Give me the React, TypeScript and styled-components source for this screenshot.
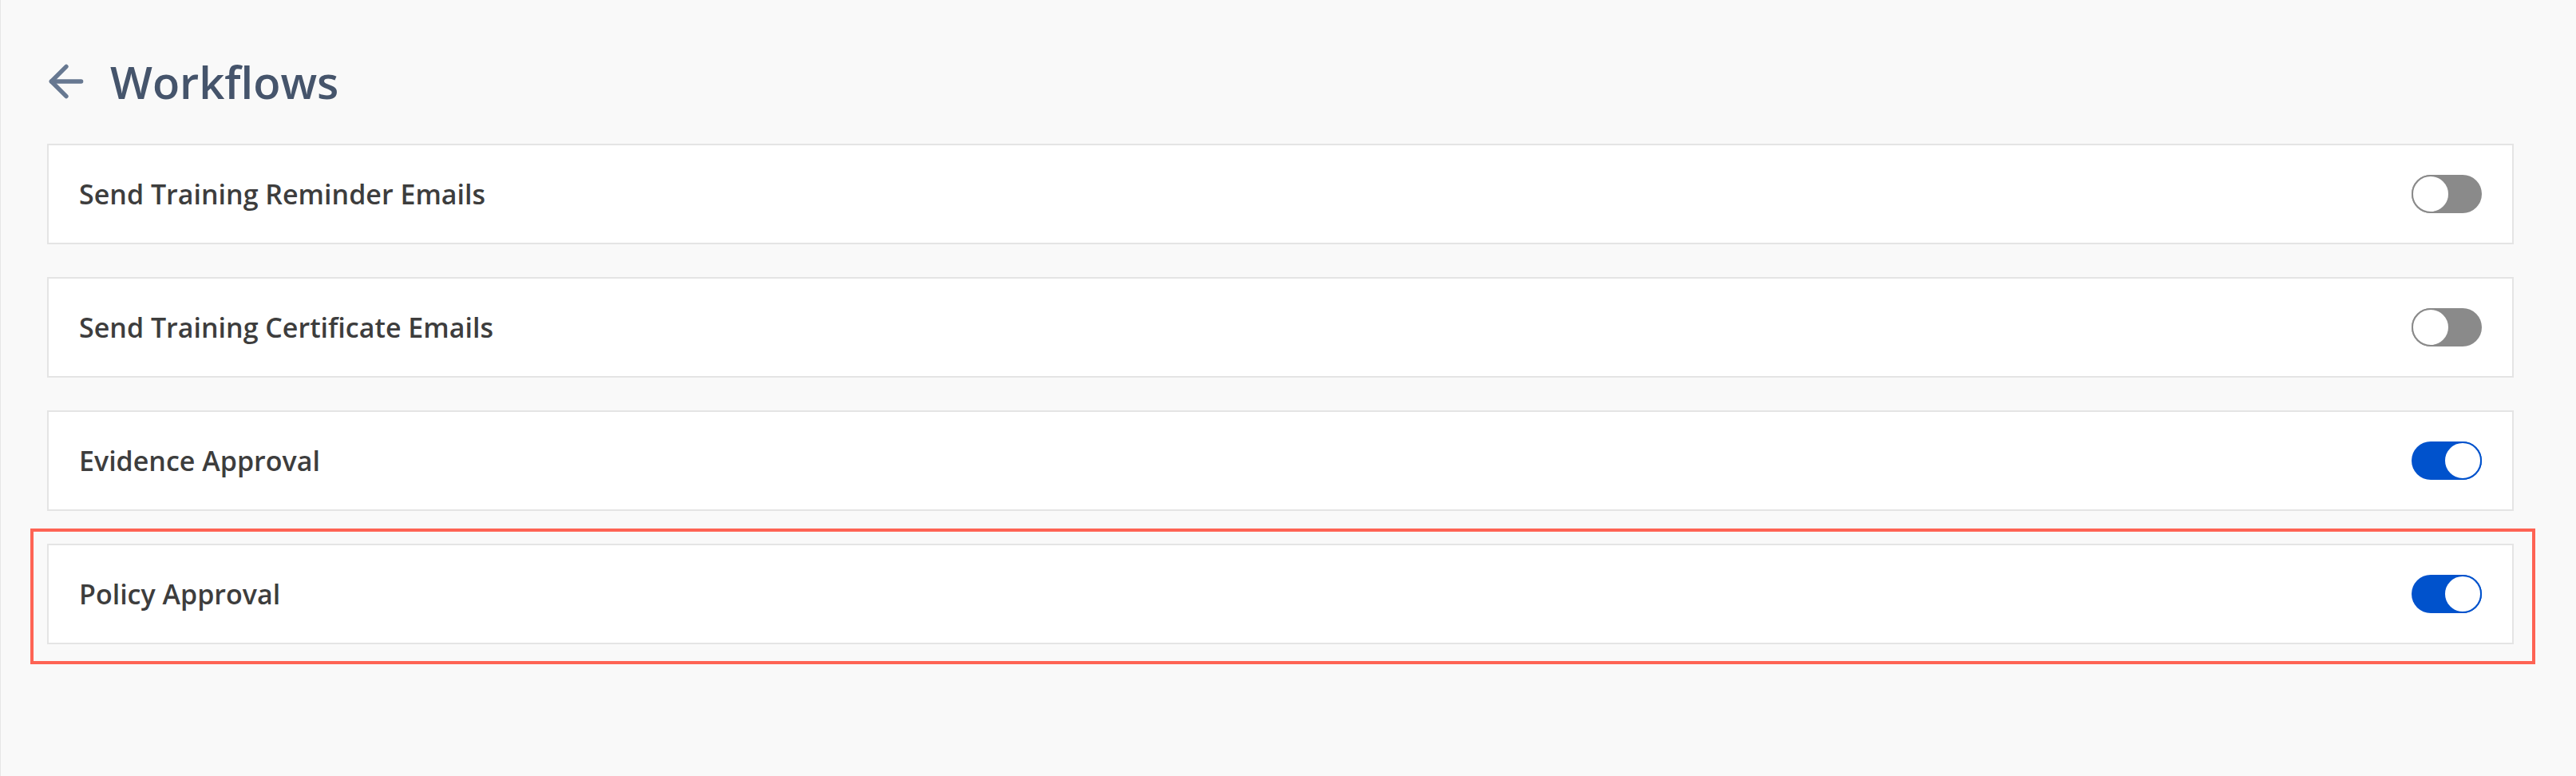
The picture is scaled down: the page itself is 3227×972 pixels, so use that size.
import React from "react";
import styled, { createGlobalStyle } from "styled-components";

const GlobalStyle = createGlobalStyle`
  html, body {
    margin: 0;
    padding: 0;
    background: #f9f9f9;
  }
  body {
    font-family: "Open Sans", "Noto Sans", sans-serif;
  }
  * { box-sizing: border-box; }
`;

const Page = styled.div`
  min-height: 100vh;
  background: #f9f9f9;
  border-left: 1px solid #e6e6e6;
  padding: 70px 78px 0 58px;
`;

const Header = styled.header`
  display: flex;
  align-items: center;
  height: 64px;
  gap: 23px;
  margin: 0 0 46px -8px;
`;

const BackButton = styled.button`
  display: flex;
  align-items: center;
  justify-content: center;
  width: 64px;
  height: 64px;
  padding: 0;
  border: none;
  background: transparent;
  color: #677891;
  cursor: pointer;
`;

const Title = styled.h1`
  margin: 0;
  font-family: "Open Sans", sans-serif;
  font-weight: 600;
  font-size: 56px;
  line-height: normal;
  color: #45546b;
`;

const List = styled.div`
  display: flex;
  flex-direction: column;
  gap: 41px;
`;

const Card = styled.div`
  display: flex;
  align-items: center;
  justify-content: space-between;
  height: 126px;
  padding: 0 38px;
  background: #ffffff;
  border: 2px solid #e4e4e4;
`;

const Label = styled.span`
  font-family: "Open Sans", sans-serif;
  font-weight: 600;
  font-size: 34px;
  color: #3d3d3d;
`;

const Track = styled.button<{ $on: boolean }>`
  display: flex;
  justify-content: ${(p) => (p.$on ? "flex-end" : "flex-start")};
  align-items: center;
  width: 88px;
  height: 48px;
  padding: 0;
  border: none;
  border-radius: 24px;
  background: ${(p) => (p.$on ? "#0052cc" : "#8a8a8a")};
  cursor: pointer;
`;

const Knob = styled.span<{ $on: boolean }>`
  display: block;
  width: 48px;
  height: 48px;
  border-radius: 50%;
  background: #ffffff;
  border: 2px solid ${(p) => (p.$on ? "#0052cc" : "#8a8a8a")};
`;

const HighlightWrap = styled.div`
  position: relative;
`;

const Highlight = styled.div`
  position: absolute;
  left: -21px;
  top: -19px;
  right: -27px;
  bottom: -25px;
  border: 4px solid #fe6354;
  pointer-events: none;
`;

type Workflow = { name: string; on: boolean; highlighted?: boolean };

const workflows: Workflow[] = [
  { name: "Send Training Reminder Emails", on: false },
  { name: "Send Training Certificate Emails", on: false },
  { name: "Evidence Approval", on: true },
  { name: "Policy Approval", on: true, highlighted: true },
];

const ArrowLeft = () => (
  <svg
    width="64"
    height="64"
    viewBox="0 0 24 24"
    fill="none"
    stroke="currentColor"
    strokeWidth="2"
    strokeLinecap="round"
    strokeLinejoin="round"
  >
    <path d="m12 19-7-7 7-7" />
    <path d="M19 12H5" />
  </svg>
);

const Toggle = ({ on }: { on: boolean }) => (
  <Track $on={on} role="switch" aria-checked={on}>
    <Knob $on={on} />
  </Track>
);

const Row = ({ w }: { w: Workflow }) => (
  <Card>
    <Label>{w.name}</Label>
    <Toggle on={w.on} />
  </Card>
);

export default function App() {
  return (
    <>
      <GlobalStyle />
      <Page>
        <Header>
          <BackButton aria-label="Back">
            <ArrowLeft />
          </BackButton>
          <Title>Workflows</Title>
        </Header>
        <List>
          {workflows.map((w) =>
            w.highlighted ? (
              <HighlightWrap key={w.name}>
                <Row w={w} />
                <Highlight />
              </HighlightWrap>
            ) : (
              <Row key={w.name} w={w} />
            )
          )}
        </List>
      </Page>
    </>
  );
}
